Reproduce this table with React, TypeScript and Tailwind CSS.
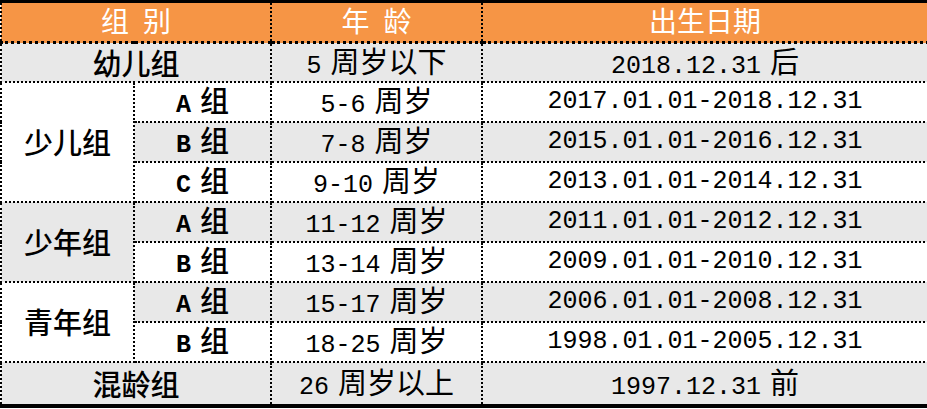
import React from 'react';

type Cell = string;

// split a label into latin and CJK runs so each gets its own font
const T = ({ text, bold = false, strong = false }: { text: Cell; bold?: boolean; strong?: boolean }) => {
  const parts = text.split(/(\s*[\u4e00-\u9fff]+)/).filter((p) => p !== '');
  return (
    <>
      {parts.map((p, i) =>
        /[\u4e00-\u9fff]/.test(p) ? (
          <span
            key={i}
            className={`font-['Noto_Sans_CJK_SC',sans-serif] text-[29px] ${strong ? 'font-medium' : 'font-normal'} ${
              /^\s/.test(p) ? 'ml-[9px]' : ''
            }`}
          >
            {p.trim()}
          </span>
        ) : (
          <span
            key={i}
            className={`font-['Liberation_Mono',monospace] text-[25px] whitespace-pre ${bold ? 'font-bold' : 'font-normal'}`}
          >
            {p}
          </span>
        )
      )}
    </>
  );
};

const gray = 'bg-[#e8e8e8]';
const white = 'bg-white';
const cell = 'border-2 border-dotted border-black text-center align-middle p-0 leading-none text-black';
const head = "font-['Noto_Sans_CJK_SC',sans-serif] text-[28px] leading-none whitespace-pre";

const App = () => {
  return (
    <div className="w-[927px] h-[409px] bg-white overflow-hidden">
      <table className="w-[927px] table-fixed border-collapse border-t-[3px] border-b-[4px] border-solid border-black">
        <colgroup>
          <col className="w-[133px]" />
          <col className="w-[137px]" />
          <col className="w-[211px]" />
          <col className="w-[446px]" />
        </colgroup>
        <thead>
          <tr className="h-[41px] bg-[#f69545] text-white">
            <th colSpan={2} className="border-l-2 border-dotted border-black border-b-[3px] border-b-solid border-b-black font-normal">
              <span className={head}>{'组\u2002别'}</span>
            </th>
            <th className="border-l-2 border-dotted border-black border-b-[3px] border-b-solid border-b-black font-normal">
              <span className={head}>{'年\u2002龄'}</span>
            </th>
            <th className="border-x-2 border-dotted border-black border-b-[3px] border-b-solid border-b-black font-normal">
              <span className={head}>出生日期</span>
            </th>
          </tr>
        </thead>
        <tbody>
          <tr className={`h-[39px] ${gray}`}>
            <td colSpan={2} className={cell}><T text="幼儿组" strong /></td>
            <td className={cell}><T text="5 周岁以下" /></td>
            <td className={cell}><T text="2018.12.31 后" /></td>
          </tr>

          <tr className={`h-[40px] ${white}`}>
            <td rowSpan={3} className={`${cell} ${white}`}><T text="少儿组" strong /></td>
            <td className={cell}><T text="A 组" bold strong /></td>
            <td className={cell}><T text="5-6 周岁" /></td>
            <td className={cell}><T text="2017.01.01-2018.12.31" /></td>
          </tr>
          <tr className={`h-[40px] ${gray}`}>
            <td className={cell}><T text="B 组" bold strong /></td>
            <td className={cell}><T text="7-8 周岁" /></td>
            <td className={cell}><T text="2015.01.01-2016.12.31" /></td>
          </tr>
          <tr className={`h-[40px] ${white}`}>
            <td className={cell}><T text="C 组" bold strong /></td>
            <td className={cell}><T text="9-10 周岁" /></td>
            <td className={cell}><T text="2013.01.01-2014.12.31" /></td>
          </tr>

          <tr className={`h-[40px] ${gray}`}>
            <td rowSpan={2} className={`${cell} ${gray}`}><T text="少年组" strong /></td>
            <td className={cell}><T text="A 组" bold strong /></td>
            <td className={cell}><T text="11-12 周岁" /></td>
            <td className={cell}><T text="2011.01.01-2012.12.31" /></td>
          </tr>
          <tr className={`h-[40px] ${white}`}>
            <td className={cell}><T text="B 组" bold strong /></td>
            <td className={cell}><T text="13-14 周岁" /></td>
            <td className={cell}><T text="2009.01.01-2010.12.31" /></td>
          </tr>

          <tr className={`h-[40px] ${gray}`}>
            <td rowSpan={2} className={`${cell} ${white}`}><T text="青年组" strong /></td>
            <td className={cell}><T text="A 组" bold strong /></td>
            <td className={cell}><T text="15-17 周岁" /></td>
            <td className={cell}><T text="2006.01.01-2008.12.31" /></td>
          </tr>
          <tr className={`h-[40px] ${white}`}>
            <td className={cell}><T text="B 组" bold strong /></td>
            <td className={cell}><T text="18-25 周岁" /></td>
            <td className={cell}><T text="1998.01.01-2005.12.31" /></td>
          </tr>

          <tr className={`h-[44px] ${gray}`}>
            <td colSpan={2} className={cell}><T text="混龄组" strong /></td>
            <td className={cell}><T text="26 周岁以上" /></td>
            <td className={cell}><T text="1997.12.31 前" /></td>
          </tr>
        </tbody>
      </table>
    </div>
  );
};

export default App;
